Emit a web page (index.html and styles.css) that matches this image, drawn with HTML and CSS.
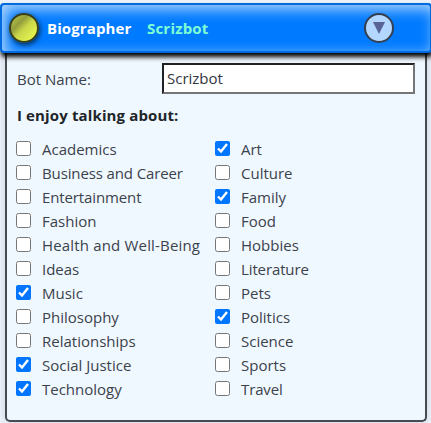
FILE: index.html
```html
<!DOCTYPE html>
<html lang="en">
<head>
<meta charset="utf-8">
<title>Biographer</title>
<link rel="stylesheet" href="styles.css">
</head>
<body>
<header class="bar">
  <span class="lamp"></span>
  <span class="title">Biographer</span>
  <span class="bot">Scrizbot</span>
  <button class="toggle" aria-label="Collapse"><svg width="12" height="12" viewBox="0 0 12 12"><path d="M0 0H12L6 12Z" fill="#596294"/></svg></button>
</header>
<main class="panel">
  <div class="name-row">
    <label class="name-label" for="bot-name">Bot Name:</label>
    <input class="name-input" id="bot-name" type="text" value="Scrizbot">
  </div>
  <h2 class="heading">I enjoy talking about:</h2>
  <div class="topics">
    <div class="column">
      <label class="topic"><input type="checkbox"><span>Academics</span></label>
      <label class="topic"><input type="checkbox"><span class="snug">Business and Career</span></label>
      <label class="topic"><input type="checkbox"><span class="snug">Entertainment</span></label>
      <label class="topic"><input type="checkbox"><span>Fashion</span></label>
      <label class="topic"><input type="checkbox"><span class="wide">Health and Well-Being</span></label>
      <label class="topic"><input type="checkbox"><span>Ideas</span></label>
      <label class="topic"><input type="checkbox" checked><span>Music</span></label>
      <label class="topic"><input type="checkbox"><span>Philosophy</span></label>
      <label class="topic"><input type="checkbox"><span>Relationships</span></label>
      <label class="topic"><input type="checkbox" checked><span>Social Justice</span></label>
      <label class="topic"><input type="checkbox" checked><span>Technology</span></label>
    </div>
    <div class="column">
      <label class="topic"><input type="checkbox" checked><span>Art</span></label>
      <label class="topic"><input type="checkbox"><span>Culture</span></label>
      <label class="topic"><input type="checkbox" checked><span>Family</span></label>
      <label class="topic"><input type="checkbox"><span>Food</span></label>
      <label class="topic"><input type="checkbox"><span>Hobbies</span></label>
      <label class="topic"><input type="checkbox"><span class="snug">Literature</span></label>
      <label class="topic"><input type="checkbox"><span>Pets</span></label>
      <label class="topic"><input type="checkbox" checked><span>Politics</span></label>
      <label class="topic"><input type="checkbox"><span>Science</span></label>
      <label class="topic"><input type="checkbox"><span>Sports</span></label>
      <label class="topic"><input type="checkbox"><span class="snug">Travel</span></label>
    </div>
  </div>
</main>
</body>
</html>
```
FILE: styles.css
```css
* { box-sizing: border-box; }
body {
  margin: 0;
  padding-top: 3px;
  height: 423px;
  overflow: hidden;
  background: #edf3fa;
  color: #3b424b;
  font: 15px/24px "Open Sans", "Noto Sans", sans-serif;
}
.bar {
  position: relative;
  display: flex;
  align-items: center;
  width: 432px;
  height: 50px;
  padding: 0 36px 0 7px;
  border: 2px solid #006ae0;
  border-radius: 4px;
  background: #007bff;
  box-shadow: inset 4px 4px 14px rgba(255, 255, 255, .7), 1px 4px 5px #000;
  font-weight: 700;
}
.lamp {
  width: 30px;
  height: 30px;
  border: 2px solid #38401b;
  border-radius: 50%;
  background: linear-gradient(135deg, #bcc74a 5%, #929d3c 32%, #c9d749 52%, #e8f850 90%);
  box-shadow: 1px 2px 5px rgba(0, 0, 0, .65);
}
.title { width: 100px; margin-left: 8px; color: #fff; letter-spacing: .1px; }
.bot { color: #7fffd4; letter-spacing: .2px; }
.toggle {
  display: grid;
  place-items: center;
  width: 30px;
  height: 30px;
  margin-left: auto;
  padding: 0;
  border: 2px solid #343f50;
  border-radius: 50%;
  background: #b3d7ff;
}
.panel {
  width: 422px;
  height: 369px;
  margin-left: 5px;
  padding: 10px 10px 0;
  border: 2px solid #464b51;
  border-top: 0;
  border-radius: 0 0 5px 5px;
  background: #f0f8ff;
  box-shadow: 0 0 10px rgba(50, 70, 110, .18);
}
.name-row { display: flex; align-items: center; }
.name-label { width: 145px; }
.name-input {
  width: 253px;
  height: 31px;
  padding: 0 3px 1px;
  border: 2px solid;
  border-color: #202124 #767676 #767676 #202124;
  background: #fff;
  color: #303640;
  font: inherit;
}
.heading { margin: 9px 0 10px; font-size: 15px; line-height: 24px; font-weight: 700; letter-spacing: .13px; color: #212529; }
.topics { display: grid; grid-template-columns: 199px 1fr; margin-left: -1px; }
.topic { display: flex; height: 24px; }
.topic input { flex: none; width: 15px; height: 15px; margin: 4px 11px 0 0; accent-color: #0075ff; }
.topic span { white-space: nowrap; }
.topic .snug { letter-spacing: -.12px; }
.topic .wide { letter-spacing: .17px; }
```
